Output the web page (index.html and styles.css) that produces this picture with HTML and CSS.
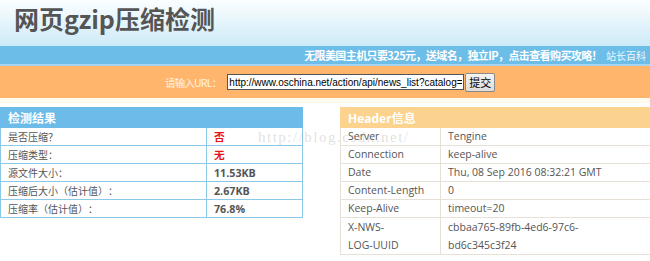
FILE: index.html
```html
<!DOCTYPE html>
<html lang="zh-CN">
<head>
    <meta charset="UTF-8">
    <title>网页gzip压缩检测</title>
    <link rel="stylesheet" href="styles.css">
</head>
<body>
    <div class="top">
        <h1>网页gzip压缩检测</h1>
    </div>
    <div class="ad-bar">
        <a class="ad" href="#">无限美国主机只要325元，送域名，独立IP，点击查看购买攻略！</a>
        <a class="wiki" href="#">站长百科</a>
    </div>
    <form class="url-bar">
        <label for="url">请输入URL：</label>
        <input type="text" id="url" value="http://www.oschina.net/action/api/news_list?catalog=18">
        <button type="submit">提交</button>
    </form>
    <div class="results">
        <table class="result-table">
            <tr><th colspan="2">检测结果</th></tr>
            <tr><td class="key">是否压缩？</td><td class="val red">否</td></tr>
            <tr><td class="key">压缩类型：</td><td class="val red">无</td></tr>
            <tr><td class="key">源文件大小：</td><td class="val">11.53KB</td></tr>
            <tr><td class="key">压缩后大小（估计值）：</td><td class="val">2.67KB</td></tr>
            <tr><td class="key">压缩率（估计值）：</td><td class="val">76.8%</td></tr>
        </table>
        <table class="header-table">
            <tr><th colspan="2">Header信息</th></tr>
            <tr><td class="key">Server</td><td>Tengine</td></tr>
            <tr><td class="key">Connection</td><td>keep-alive</td></tr>
            <tr><td class="key">Date</td><td>Thu, 08 Sep 2016 08:32:21 GMT</td></tr>
            <tr><td class="key">Content-Length</td><td>0</td></tr>
            <tr><td class="key">Keep-Alive</td><td>timeout=20</td></tr>
            <tr class="tall"><td class="key">X-NWS-<br>LOG-UUID</td><td>cbbaa765-89fb-4ed6-97c6-<br>bd6c345c3f24</td></tr>
        </table>
        <div class="watermark">http://blog.csdn.net/</div>
    </div>
</body>
</html>
```

FILE: styles.css
```css
body {
    margin: 0;
    width: 650px;
    overflow: hidden;
    background: #fff;
    font-family: "Noto Sans CJK SC", sans-serif;
    color: #555;
    text-spacing-trim: space-all;
}
.top {
    height: 46px;
    background: linear-gradient(#fbfeff, #cdeaf8);
}
.top h1 {
    margin: 0;
    padding: 2px 0 0 14px;
    font-size: 25px;
    line-height: 32px;
    font-weight: bold;
    color: #555;
}
.ad-bar {
    height: 18px;
    background: #6cbde8;
    border-bottom: 2px solid #a8d6ee;
    display: flex;
    justify-content: flex-end;
    align-items: center;
    gap: 4px;
    padding-right: 4px;
    font-size: 11px;
}
.ad-bar a {
    color: #fff;
    text-decoration: none;
}
.ad {
    font-weight: bold;
    letter-spacing: -0.6px;
}
.wiki {
    font-size: 10px;
    opacity: 0.9;
}
.url-bar {
    height: 32px;
    margin: 0;
    padding-left: 165px;
    background: #ffb66c;
    border-bottom: 5px solid #fffaee;
    display: flex;
    align-items: center;
}
.url-bar label {
    color: #fff3e6;
    font-size: 10.5px;
    letter-spacing: -0.8px;
    margin-right: 6px;
}
.url-bar input {
    width: 233px;
    height: 14px;
    padding: 0 1px;
    border: 1px solid #555;
    font-family: "Liberation Sans", Arial, sans-serif;
    font-size: 10px;
    color: #000;
}
.url-bar button {
    height: 19px;
    margin-left: 1px;
    padding: 0 3px;
    font-family: "Noto Sans CJK SC", sans-serif;
    font-size: 11px;
    line-height: 15px;
    color: #000;
    background: linear-gradient(#f4f4f4, #dcdcdc);
    border: 1px solid #8a8a8a;
    border-radius: 2px;
}
.results {
    position: relative;
    display: flex;
    align-items: flex-start;
    padding-top: 4px;
}
table {
    border-collapse: collapse;
    font-size: 10px;
}
th {
    height: 19px;
    padding: 0 0 0 7px;
    text-align: left;
    color: #fff;
    font-size: 12px;
    font-weight: bold;
}
td {
    height: 17px;
    padding: 0 0 0 7px;
}
.result-table {
    width: 303px;
    flex: none;
}
.result-table th {
    background: #6cbbe8;
    border: 1px solid #6cbbe8;
}
.result-table td {
    border: 1px solid #8cc8e8;
}
.result-table .key {
    width: 198px;
}
.result-table .val {
    font-family: "Open Sans", "Noto Sans CJK SC", sans-serif;
    font-weight: bold;
    font-size: 10.7px;
    color: #555;
}
.result-table .red {
    color: #e8111a;
    font-family: "Noto Sans CJK SC", sans-serif;
}
.header-table {
    width: 330px;
    margin-left: 37px;
    flex: none;
    font-family: "Open Sans", "Noto Sans CJK SC", sans-serif;
    font-size: 10.5px;
}
.header-table th {
    background: #fcd38e;
    border: 1px solid #fcd38e;
}
.header-table td {
    border: 1px solid #e6e0d6;
    height: 17px;
    line-height: 17px;
}
.header-table .key {
    width: 92px;
}
.header-table .tall td {
    height: 36px;
    line-height: 18px;
}
.watermark {
    position: absolute;
    left: 258px;
    top: 26px;
    font-family: "Liberation Serif", serif;
    font-size: 15px;
    letter-spacing: 1.5px;
    color: rgba(150, 150, 150, 0.3);
    pointer-events: none;
}
```
